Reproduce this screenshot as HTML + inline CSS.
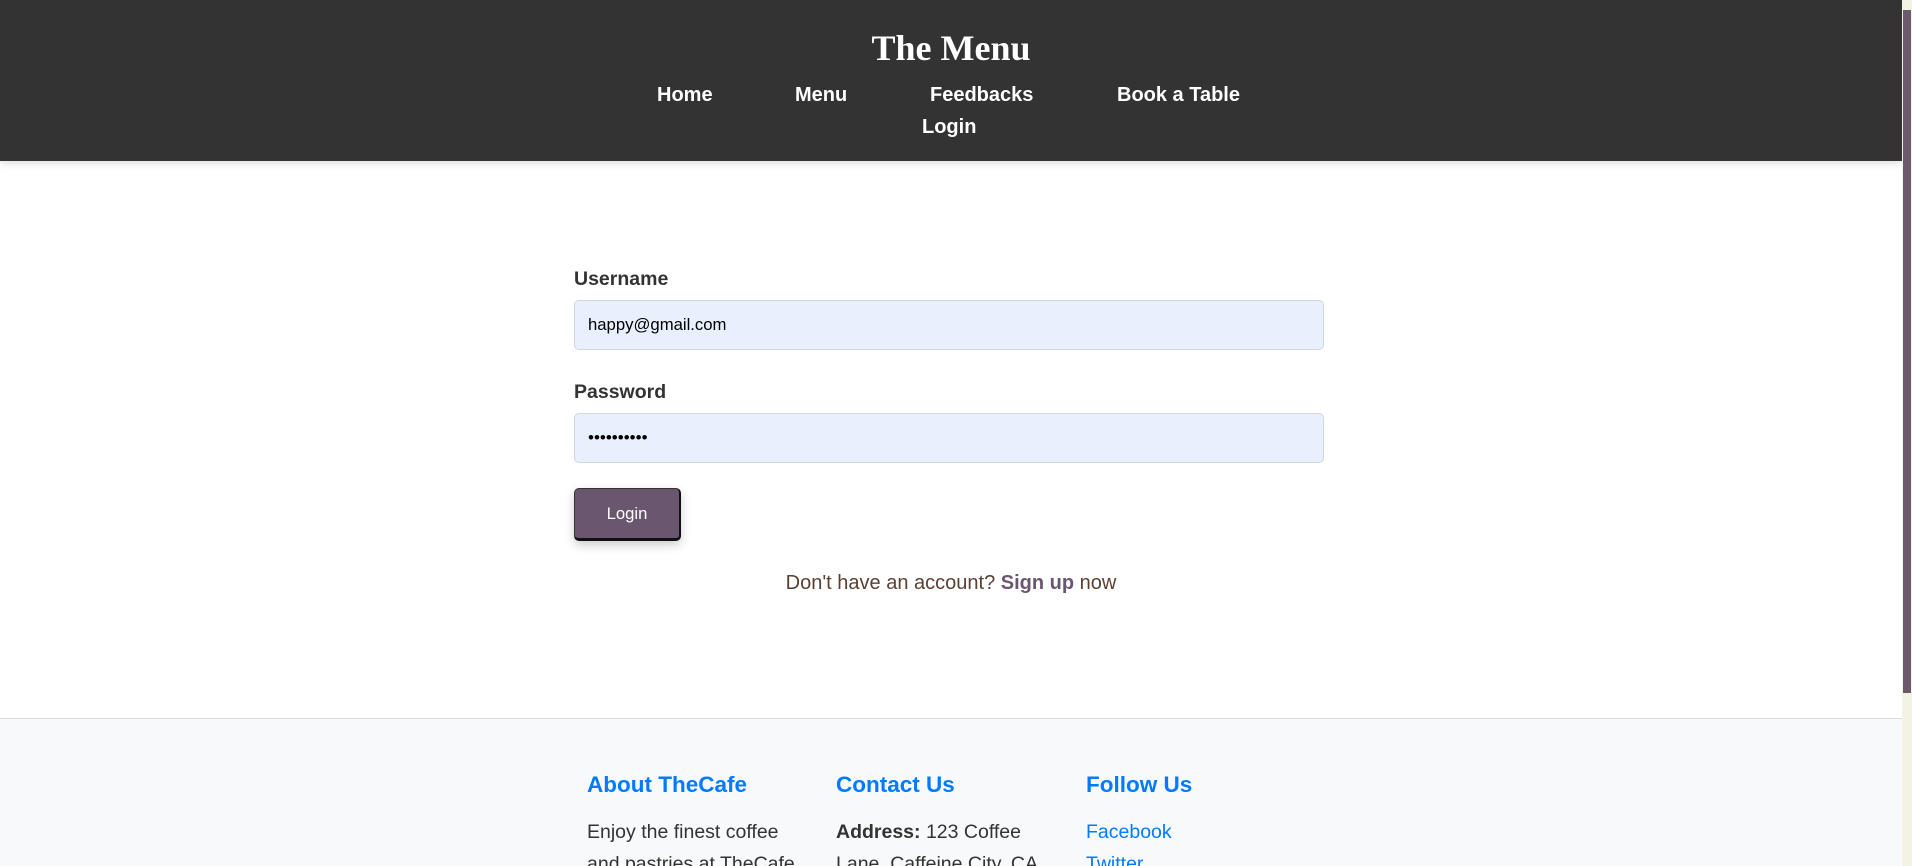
<!DOCTYPE html>
<html><head><meta charset="utf-8">
<style>
*{margin:0;padding:0;box-sizing:border-box}
html,body{width:1912px;height:866px;overflow:hidden;background:#fff;font-family:"Liberation Sans",Arial,sans-serif}
.wrap{position:relative;width:1912px;height:866px;overflow:hidden}
.hdr{position:absolute;left:0;top:0;width:1902px;height:161px;background:#333;box-shadow:0 2px 8px rgba(0,0,0,.15)}
.title{position:absolute;left:0;width:1902px;top:27px;text-align:center;color:#fff;font-family:"Liberation Serif",serif;font-weight:bold;font-size:36px}
.nav{position:absolute;color:#fff;font-weight:bold;font-size:20px;line-height:24px}
.lbl{position:absolute;left:574px;font-weight:bold;font-size:19.5px;color:#333}
.inp{position:absolute;left:574px;width:750px;height:50px;background:#e8f0fe;border:1px solid #d2d6dc;border-radius:5px;font-size:16.7px;padding-left:13px;line-height:48px;color:#000}
.btn{position:absolute;left:574px;top:488px;width:107px;height:53px;background:#6b5670;border:1px solid #333;border-right:2px solid #111;border-bottom:3px solid #111;border-radius:5px;color:#fff;font-size:16.7px;text-align:center;line-height:49px;box-shadow:0 4px 10px rgba(0,0,0,.2)}
.sig{position:absolute;left:0;width:1902px;top:572px;text-align:center;font-size:20px;color:#5b3f33}
.sig b{color:#6b5670}
.foot{position:absolute;left:0;top:718px;width:1902px;height:148px;background:#f8f9fa;border-top:1px solid #dcdcdc}
.fh{position:absolute;top:772px;color:#007bff;font-weight:bold;font-size:22.5px}
.ft{position:absolute;top:816px;font-size:19.5px;line-height:32px;color:#333;width:220px}
.ft a{color:#007bff;text-decoration:none}
.sb{position:absolute;left:1902px;top:0;width:10px;height:866px;background:#f3f3e3}
.th{position:absolute;left:1903px;top:10px;width:8px;height:683px;background:#6b5a6a}
</style></head><body><div class="wrap">
<div class="hdr">
<div class="title">The Menu</div>
<div class="nav" style="left:657px;top:83px">Home</div>
<div class="nav" style="left:795px;top:83px">Menu</div>
<div class="nav" style="left:930px;top:83px">Feedbacks</div>
<div class="nav" style="left:1117px;top:83px">Book a Table</div>
<div class="nav" style="left:922px;top:115px">Login</div>
</div>
<div class="lbl" style="top:268px">Username</div>
<div class="inp" style="top:300px">happy@gmail.com</div>
<div class="lbl" style="top:381px">Password</div>
<div class="inp" style="top:413px;font-size:17px">••••••••••</div>
<div class="btn">Login</div>
<div class="sig">Don't have an account? <b>Sign up</b> now</div>
<div class="foot"></div>
<div class="fh" style="left:587px">About TheCafe</div>
<div class="fh" style="left:836px">Contact Us</div>
<div class="fh" style="left:1086px">Follow Us</div>
<div class="ft" style="left:587px;width:215px">Enjoy the finest coffee and pastries at TheCafe.</div>
<div class="ft" style="left:836px"><b>Address:</b> 123 Coffee Lane, Caffeine City, CA</div>
<div class="ft" style="left:1086px"><a>Facebook</a><br><a>Twitter</a></div>
<div class="sb"></div><div class="th"></div>
</div></body></html>
